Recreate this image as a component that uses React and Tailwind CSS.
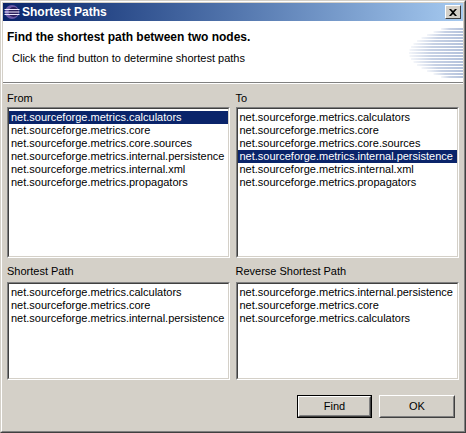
import React from "react";

const items = [
  "net.sourceforge.metrics.calculators",
  "net.sourceforge.metrics.core",
  "net.sourceforge.metrics.core.sources",
  "net.sourceforge.metrics.internal.persistence",
  "net.sourceforge.metrics.internal.xml",
  "net.sourceforge.metrics.propagators",
];

const shortest = [
  "net.sourceforge.metrics.calculators",
  "net.sourceforge.metrics.core",
  "net.sourceforge.metrics.internal.persistence",
];

function ListBox({ rows, selected, className }) {
  return (
    <div className={"border border-t-[#808080] border-l-[#808080] border-r-white border-b-white " + className}>
      <div className="h-full border border-t-[#404040] border-l-[#404040] border-r-[#d4d0c8] border-b-[#d4d0c8] bg-white pt-[2px]">
        {rows.map((r, i) => (
          <div
            key={r}
            className={
              "h-[13px] leading-[13px] pl-[2px] whitespace-nowrap " +
              (i === selected ? "bg-[#0a246a] text-white" : "text-black")
            }
          >
            {r}
          </div>
        ))}
      </div>
    </div>
  );
}

function Button({ children, isDefault }) {
  return (
    <div className={isDefault ? "border border-black" : ""}>
      <div className="border border-t-white border-l-white border-r-[#404040] border-b-[#404040]">
        <div
          className={
            "flex items-center justify-center border border-t-[#d4d0c8] border-l-[#d4d0c8] border-r-[#808080] border-b-[#808080] text-black " +
            (isDefault ? "w-[71px] h-[19px]" : "w-[74px] h-[21px]")
          }
        >
          {children}
        </div>
      </div>
    </div>
  );
}

function EclipseIcon() {
  return (
    <svg width="16" height="16" viewBox="0 0 16 16">
      <circle cx="8" cy="8" r="7" fill="#6a5aa8" />
      <circle cx="9.5" cy="8" r="5" fill="#2a1f5c" />
      <rect x="0.5" y="5" width="15" height="1" fill="#f0ecff" />
      <rect x="0.5" y="7.5" width="15" height="1" fill="#f0ecff" />
      <rect x="0.5" y="10" width="15" height="1" fill="#f0ecff" />
    </svg>
  );
}

function HeaderArt() {
  const rows = [0, 1, 2, 3, 4, 5, 6, 7, 8, 9, 10, 11, 12, 13, 14, 15, 16];
  return (
    <svg width="56" height="54" viewBox="0 0 56 54">
      <defs>
        <linearGradient id="fade" x1="0" x2="1" y1="0" y2="0">
          <stop offset="0" stopColor="#b4c2dc" stopOpacity="0.15" />
          <stop offset="0.4" stopColor="#b4c2dc" stopOpacity="0.75" />
          <stop offset="1" stopColor="#b4c2dc" stopOpacity="1" />
        </linearGradient>
      </defs>
      {rows.map((r) => {
        const d = Math.abs(r - 8);
        const x = 2 + d * d * 0.5;
        return <rect key={r} x={x} y={2 + r * 3} width={56 - x} height="2" fill="url(#fade)" />;
      })}
    </svg>
  );
}

export default function App() {
  return (
    <div className="w-[466px] h-[433px] border border-t-[#d4d0c8] border-l-[#d4d0c8] border-r-[#404040] border-b-[#404040] font-['Liberation_Sans',Arial,sans-serif] text-[11px]">
      <div className="h-full border border-t-white border-l-white border-r-[#808080] border-b-[#808080] bg-[#d4d0c8] p-px flex flex-col">
        {/* title bar */}
        <div className="h-[18px] flex items-center bg-gradient-to-r from-[#0a246a] to-[#a6caf0] pl-[1px] pr-[2px]">
          <EclipseIcon />
          <span className="ml-[2px] text-white font-bold text-[12px]">Shortest Paths</span>
          <div className="ml-auto w-[16px] h-[14px] border border-t-white border-l-white border-r-[#404040] border-b-[#404040] bg-[#d4d0c8] flex items-center justify-center">
            <svg width="8" height="7" viewBox="0 0 8 7">
              <path d="M0 0h2l2 2 2-2h2L5 3.5 8 7H6L4 5 2 7H0l3-3.5z" fill="black" />
            </svg>
          </div>
        </div>

        {/* header */}
        <div className="h-[62px] bg-white flex border-b border-b-[#808080]">
          <div className="flex-1 pl-[4px] pt-[9px]">
            <div className="font-bold text-[12px] leading-[15px] text-black">Find the shortest path between two nodes.</div>
            <div className="mt-[5px] pl-[5px] text-black">Click the find button to determine shortest paths</div>
          </div>
          <div className="self-end mb-[2px]">
            <HeaderArt />
          </div>
        </div>
        <div className="h-px bg-white" />

        {/* body */}
        <div className="flex-1 flex flex-col px-[4px] pt-[7px]">
          <div className="flex gap-[6px]">
            <div className="w-[223px]">
              <div className="h-[14px] leading-[14px] text-black">From</div>
              <ListBox rows={items} selected={0} className="mt-[2px] h-[151px]" />
            </div>
            <div className="w-[224px]">
              <div className="h-[14px] leading-[14px] text-black">To</div>
              <ListBox rows={items} selected={3} className="mt-[2px] h-[151px]" />
            </div>
          </div>
          <div className="flex gap-[6px] mt-[6px]">
            <div className="w-[223px]">
              <div className="h-[14px] leading-[14px] text-black">Shortest Path</div>
              <ListBox rows={shortest} selected={-1} className="mt-[4px] h-[98px]" />
            </div>
            <div className="w-[224px]">
              <div className="h-[14px] leading-[14px] text-black">Reverse Shortest Path</div>
              <ListBox rows={[...shortest].reverse()} selected={-1} className="mt-[4px] h-[98px]" />
            </div>
          </div>
          <div className="flex justify-end gap-[7px] mt-[15px] pr-[4px]">
            <Button isDefault>Find</Button>
            <Button>OK</Button>
          </div>
        </div>
      </div>
    </div>
  );
}
